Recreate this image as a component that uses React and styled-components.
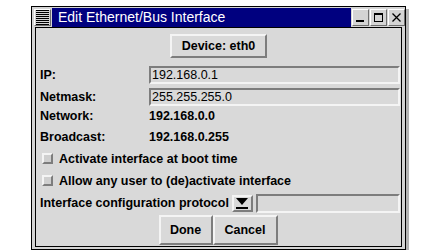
import React from 'react';
import styled, { createGlobalStyle } from 'styled-components';

const GlobalStyle = createGlobalStyle`
  body {
    margin: 0;
    background: #fff;
    font-family: 'Liberation Sans', Helvetica, Arial, sans-serif;
  }
  #root {
    padding: 6px 0 0 31px;
  }
`;

const Window = styled.div`
  box-sizing: border-box;
  width: 375px;
  border: 1px solid #000;
  background: #d4d4d4;
  padding: 1px 3px 2px 3px;
  box-shadow: 3px 3px 0 #b4b4b4;
`;

const TitleRow = styled.div`
  display: flex;
  align-items: center;
  height: 19px;
  margin: 0 -3px 0 -1px;
`;

// raised little square used for the window-manager buttons
const FrameButton = styled.div`
  box-sizing: border-box;
  width: ${({ w }) => w || 17}px;
  height: 17px;
  margin: 0 ${({ gap }) => (gap ? 1 : 0)}px 0 0;
  background: #d4d4d4;
  border: 1px solid;
  border-color: #fff #6e6e6e #6e6e6e #fff;
  display: flex;
  align-items: center;
  justify-content: center;
  flex-shrink: 0;
`;

const TitleBar = styled.div`
  flex: 1;
  height: 19px;
  background: #00007f;
  color: #fff;
  font-size: 14px;
  line-height: 19px;
  padding-left: 6px;
  margin-right: 1px;
  white-space: nowrap;
  overflow: hidden;
`;

const Client = styled.div`
  border: 1px solid #000;
  background: #d9d9d9;
  padding: 6px 0 1px 0;
  font-size: 12.5px;
  font-weight: bold;
  color: #000;
  display: flex;
  flex-direction: column;
`;

const Raised = styled.button`
  box-sizing: border-box;
  font: inherit;
  color: #000;
  background: #d9d9d9;
  height: ${({ h }) => h}px;
  width: ${({ w }) => w}px;
  padding: 0;
  border: 2px solid;
  border-color: #f4f4f4 #7d7d7d #7d7d7d #f4f4f4;
  cursor: default;
`;

const Center = styled.div`
  display: flex;
  justify-content: center;
  margin-top: ${({ mt }) => mt || 0}px;
`;

const Row = styled.div`
  display: flex;
  align-items: center;
  height: ${({ h }) => h}px;
  margin-top: ${({ mt }) => mt}px;
  padding-left: 4px;
`;

const Label = styled.span`
  width: 109px;
  flex-shrink: 0;
`;

const Entry = styled.div`
  box-sizing: border-box;
  flex: 1;
  height: ${({ h }) => h || 18}px;
  border: 2px solid;
  border-color: #7d7d7d #f4f4f4 #f4f4f4 #7d7d7d;
  background: #d9d9d9;
  font-weight: normal;
  font-size: 12.5px;
  line-height: 14px;
  padding-left: 1px;
  margin-right: 1px;
`;

const Check = styled.span`
  box-sizing: border-box;
  width: 11px;
  height: 11px;
  margin: 0 6px 0 2px;
  background: #cfcfcf;
  border: 2px solid;
  border-color: #f4f4f4 #7d7d7d #7d7d7d #f4f4f4;
`;

const MenuIndicator = styled.div`
  box-sizing: border-box;
  width: 21px;
  height: 17px;
  margin: 0 3px 0 3px;
  border: 2px solid;
  border-color: #f4f4f4 #7d7d7d #7d7d7d #f4f4f4;
  display: flex;
  align-items: center;
  justify-content: center;
`;

const Buttons = styled.div`
  display: flex;
  justify-content: center;
  margin-top: 2px;
  padding-right: 1px;
`;

const MenuGlyph = () => (
  <svg width="13" height="15" viewBox="0 0 13 15">
    {[0, 2, 4, 6, 8, 10, 12, 14].map((y) => (
      <rect key={y} x="0" y={y} width="13" height="1" fill="#000" />
    ))}
  </svg>
);

const MinGlyph = () => (
  <svg width="11" height="11" viewBox="0 0 11 11">
    <rect x="1" y="8" width="8" height="2" fill="#000" />
  </svg>
);

const MaxGlyph = () => (
  <svg width="11" height="11" viewBox="0 0 11 11">
    <rect x="1.5" y="1.5" width="8" height="8" fill="none" stroke="#000" strokeWidth="1" />
    <rect x="1" y="1" width="9" height="2" fill="#000" />
  </svg>
);

const CloseGlyph = () => (
  <svg width="11" height="11" viewBox="0 0 11 11">
    <path d="M1.5 1.5 L9.5 9.5 M9.5 1.5 L1.5 9.5" stroke="#000" strokeWidth="1.3" />
  </svg>
);

const DownGlyph = () => (
  <svg width="12" height="11" viewBox="0 0 12 11">
    <path d="M0 0 H12 L6 7 Z" fill="#000" />
    <rect x="0" y="9" width="12" height="2" fill="#000" />
  </svg>
);

export default function App() {
  return (
    <>
      <GlobalStyle />
      <Window>
        <TitleRow>
          <FrameButton w={17} gap>
            <MenuGlyph />
          </FrameButton>
          <TitleBar>Edit Ethernet/Bus Interface</TitleBar>
          <FrameButton gap>
            <MinGlyph />
          </FrameButton>
          <FrameButton gap>
            <MaxGlyph />
          </FrameButton>
          <FrameButton>
            <CloseGlyph />
          </FrameButton>
        </TitleRow>
        <Client>
          <Center>
            <Raised w={97} h={24}>Device: eth0</Raised>
          </Center>
          <Row h={18} mt={8}>
            <Label>IP:</Label>
            <Entry>192.168.0.1</Entry>
          </Row>
          <Row h={18} mt={4}>
            <Label>Netmask:</Label>
            <Entry>255.255.255.0</Entry>
          </Row>
          <Row h={20} mt={0}>
            <Label>Network:</Label>
            <span>192.168.0.0</span>
          </Row>
          <Row h={20} mt={1}>
            <Label>Broadcast:</Label>
            <span>192.168.0.255</span>
          </Row>
          <Row h={21} mt={1}>
            <Check />
            <span>Activate interface at boot time</span>
          </Row>
          <Row h={21} mt={1}>
            <Check />
            <span>Allow any user to (de)activate interface</span>
          </Row>
          <Row h={20} mt={2}>
            <span>Interface configuration protocol</span>
            <MenuIndicator>
              <DownGlyph />
            </MenuIndicator>
            <Entry h={19} />
          </Row>
          <Buttons>
            <Raised w={54} h={30}>Done</Raised>
            <Raised w={65} h={30}>Cancel</Raised>
          </Buttons>
        </Client>
      </Window>
    </>
  );
}
